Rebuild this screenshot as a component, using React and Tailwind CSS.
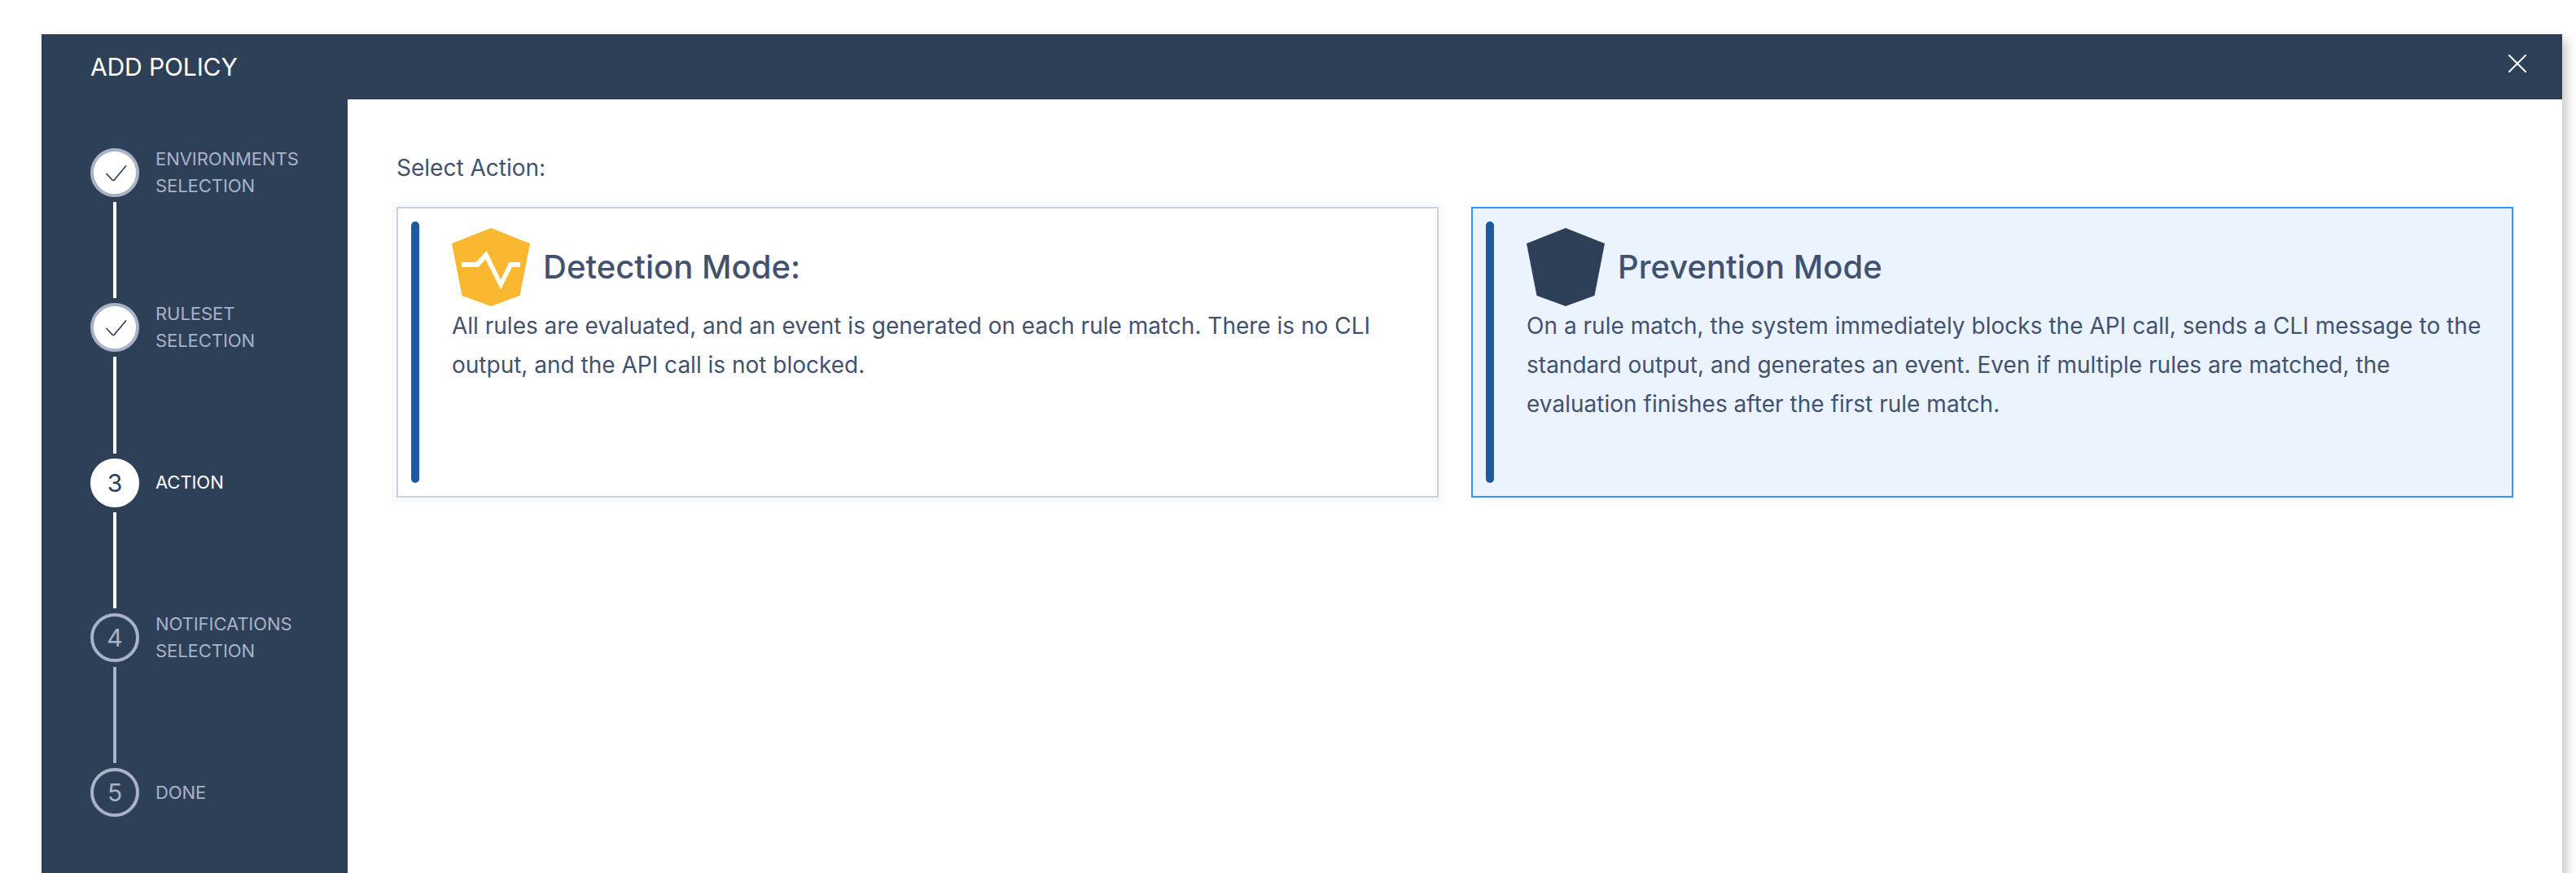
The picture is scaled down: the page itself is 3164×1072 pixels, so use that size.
import React from "react";

const steps = [
  { label: ["ENVIRONMENTS", "SELECTION"], state: "done" },
  { label: ["RULESET", "SELECTION"], state: "done" },
  { label: ["ACTION"], state: "current" },
  { label: ["NOTIFICATIONS", "SELECTION"], state: "pending" },
  { label: ["DONE"], state: "pending" },
];

const circleStyles = {
  done: "border-[#a9b2c6] bg-white text-[#2e3f58]",
  current: "border-white bg-white text-[#2e3f58]",
  pending: "border-[#a9b2c6] text-[#a9b2c6]",
};

function Step({ step, index, last }) {
  return (
    <li className={last ? "flex h-[60px] gap-5" : "flex h-[190.25px] gap-5"}>
      <div className="flex w-[60px] shrink-0 flex-col items-center gap-1.5">
        <div
          className={`flex size-[60px] shrink-0 items-center justify-center rounded-full border-4 text-[30px] leading-none ${circleStyles[step.state]}`}
        >
          {step.state === "done" ? (
            <svg viewBox="0 0 60 60" className="size-[60px] shrink-0" fill="none">
              <path d="M20 31.500 26.700 38.800q1.500 1.200 2.800 0L43.500 22" stroke="#2e3f58" strokeWidth="1.7" strokeLinecap="round" strokeLinejoin="round" />
            </svg>
          ) : (
            index + 1
          )}
        </div>
        {!last && (
          <div className={step.state === "pending" ? "mb-1.5 w-1 flex-1 bg-[#a9b2c6]" : "mb-1.5 w-1 flex-1 bg-white"} />
        )}
      </div>
      <div
        className={
          step.state === "current"
            ? "flex h-[60px] flex-col justify-center text-[22px] leading-[33px] tracking-[-0.06px] text-white"
            : "flex h-[60px] flex-col justify-center text-[22px] leading-[33px] tracking-[-0.06px] text-[#a9b2c6]"
        }
      >
        {step.label.map((line) => (
          <span key={line} className="whitespace-nowrap">{line}</span>
        ))}
      </div>
    </li>
  );
}

function Shield({ color, pulse }) {
  return (
    <svg viewBox="0 0 96 96" className="size-24 shrink-0">
      <path d="M48 0 96 19 83.500 83 48 96 12.500 83 0 19Z" fill={color} />
      {pulse && (
        <path d="M12 42H29.500L42.700 28 60 63.500 70.300 42H84V48H74L60 75.500 41.500 38.500 32.500 48H12Z" fill="white" />
      )}
    </svg>
  );
}

function ModeCard({ title, lines, selected, icon }) {
  return (
    <section
      className={
        selected
          ? "flex h-[357px] w-[1280px] border-2 border-[#3793ff] bg-[#ebf3ff] p-4 tracking-[0.025px]"
          : "flex h-[357px] w-[1280px] border-2 border-[#c9d1e1] bg-white p-4 shadow-[0_0_0_6px_#f8f9fb]"
      }
    >
      <div className="h-[321px] w-2.5 shrink-0 rounded-full bg-[#205a9e]" />
      <div className="ml-10 pt-2">
        <div className="flex items-center">
          {icon}
          <h2 className="ml-4 whitespace-nowrap text-[40px] font-medium leading-[48px] tracking-[0.03px]">{title}</h2>
        </div>
        <div className="text-[28px] leading-[48px]">
          {lines.map((line) => (
            <p key={line} className="whitespace-nowrap">{line}</p>
          ))}
        </div>
      </div>
    </section>
  );
}

export default function App() {
  return (
    <div className="h-[1072px] w-[3164px] overflow-hidden bg-white pl-[51px] pt-[42px] font-['Inter',sans-serif] text-[#42526e]">
      <div className="flex h-[1100px] w-[3096px] flex-col bg-white shadow-[6px_6px_12px_rgba(0,0,0,0.2)]">
        <header className="flex h-20 shrink-0 items-center justify-between bg-[#2e3f58] pl-[60px] pr-[44px] text-white">
          <h1 className="text-[30px] leading-9 tracking-[-0.12px]">ADD POLICY</h1>
          <svg viewBox="0 0 22 22" className="mb-2 size-[22px]" fill="none">
            <path d="M.7.7 21.300 21.300M21.300.7.7 21.300" stroke="white" strokeWidth="2" strokeLinecap="round" />
          </svg>
        </header>
        <div className="flex flex-1">
          <nav className="w-[376px] shrink-0 bg-[#2e3f58] pl-[60px] pt-[60px]">
            <ol>
              {steps.map((step, i) => (
                <Step key={i} step={step} index={i} last={i === steps.length - 1} />
              ))}
            </ol>
          </nav>
          <main className="pl-[60px] pt-[60px]">
            <p className="mb-6 text-[28px] leading-[48px]">Select Action:</p>
            <div className="flex gap-10">
              <ModeCard
                title="Detection Mode:"
                icon={<Shield color="#f9b82f" pulse />}
                lines={[
                  "All rules are evaluated, and an event is generated on each rule match. There is no CLI",
                  "output, and the API call is not blocked.",
                ]}
              />
              <ModeCard
                selected
                title="Prevention Mode"
                icon={<Shield color="#2e3f58" />}
                lines={[
                  "On a rule match, the system immediately blocks the API call, sends a CLI message to the",
                  "standard output, and generates an event. Even if multiple rules are matched, the",
                  "evaluation finishes after the first rule match.",
                ]}
              />
            </div>
          </main>
        </div>
      </div>
    </div>
  );
}
